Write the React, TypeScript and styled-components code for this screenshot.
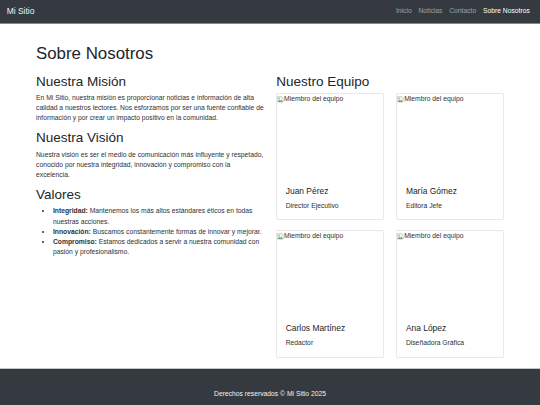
import React from 'react';
import styled, { createGlobalStyle } from 'styled-components';

const GlobalStyle = createGlobalStyle`
  html {
    font-size: 6.75px;
  }
  body {
    margin: 0;
    background: #fff;
    color: #212529;
    font-family: 'Liberation Sans', Arial, Helvetica, sans-serif;
    font-size: 1rem;
    line-height: 1.5;
  }
  * {
    box-sizing: border-box;
  }
`;

const navLinks = [
  { label: 'Inicio', active: false },
  { label: 'Noticias', active: false },
  { label: 'Contacto', active: false },
  { label: 'Sobre Nosotros', active: true },
];

const team = [
  { name: 'Juan Pérez', role: 'Director Ejecutivo' },
  { name: 'María Gómez', role: 'Editora Jefe' },
  { name: 'Carlos Martínez', role: 'Redactor' },
  { name: 'Ana López', role: 'Diseñadora Gráfica' },
];

const values = [
  { title: 'Integridad:', text: 'Mantenemos los más altos estándares éticos en todas nuestras acciones.' },
  { title: 'Innovación:', text: 'Buscamos constantemente formas de innovar y mejorar.' },
  { title: 'Compromiso:', text: 'Estamos dedicados a servir a nuestra comunidad con pasión y profesionalismo.' },
];

const BrokenImageIcon = () => (
  <IconSvg viewBox="0 0 16 16" aria-hidden="true">
    <path d="M1.5 1.5h10l3 3v10h-13z" fill="#f4f4f4" stroke="#8f8f8f" />
    <circle cx="5" cy="5.5" r="1.6" fill="#4a90d9" />
    <path d="M2.5 13.5l3.5-4.5 2.5 2.5 2-2 3 4z" fill="#3fa34d" />
  </IconSvg>
);

const App = () => {
  return (
    <>
      <GlobalStyle />
      <Navbar>
        <Brand>Mi Sitio</Brand>
        <NavList>
          {navLinks.map(({ label, active }) => (
            <li key={label}>
              <NavLink href="#" $active={active}>
                {label}
              </NavLink>
            </li>
          ))}
        </NavList>
      </Navbar>

      <Main>
        <PageTitle>Sobre Nosotros</PageTitle>
        <Row>
          <Column>
            <SectionTitle>Nuestra Misión</SectionTitle>
            <Text>
              En Mi Sitio, nuestra misión es proporcionar noticias e información de alta calidad a
              nuestros lectores. Nos esforzamos por ser una fuente confiable de información y por crear
              un impacto positivo en la comunidad.
            </Text>
            <SectionTitle>Nuestra Visión</SectionTitle>
            <Text>
              Nuestra visión es ser el medio de comunicación más influyente y respetado, conocido por
              nuestra integridad, innovación y compromiso con la excelencia.
            </Text>
            <SectionTitle>Valores</SectionTitle>
            <ValuesList>
              {values.map(({ title, text }) => (
                <ValueItem key={title}>
                  <strong>{title}</strong> {text}
                </ValueItem>
              ))}
            </ValuesList>
          </Column>

          <Column>
            <SectionTitle>Nuestro Equipo</SectionTitle>
            <TeamGrid>
              {team.map(({ name, role }) => (
                <Card key={name}>
                  <CardImage role="img" aria-label="Miembro del equipo">
                    <BrokenImageIcon />
                    <AltText>Miembro del equipo</AltText>
                  </CardImage>
                  <CardBody>
                    <CardTitle>{name}</CardTitle>
                    <CardText>{role}</CardText>
                  </CardBody>
                </Card>
              ))}
            </TeamGrid>
          </Column>
        </Row>
      </Main>

      <Footer>
        <FooterText>Derechos reservados © Mi Sitio 2025</FooterText>
      </Footer>
    </>
  );
};

const Navbar = styled.nav`
  display: flex;
  align-items: center;
  justify-content: space-between;
  height: 24px;
  padding: 0 1rem;
  background: #343a40;
  border-bottom: 1px solid #868a8e;
`;

const Brand = styled.a`
  color: #f2f2f2;
  font-size: 1.25rem;
  line-height: 1.5;
  text-decoration: none;
`;

const NavList = styled.ul`
  display: flex;
  margin: 0;
  padding: 0;
  list-style: none;
`;

const NavLink = styled.a<{ $active?: boolean }>`
  display: block;
  padding: 0 0.5rem;
  color: ${(p) => (p.$active ? '#fff' : 'rgba(255, 255, 255, 0.5)')};
  text-decoration: none;
`;

const Main = styled.main`
  width: 468px;
  margin: 20.25px auto 0;
`;

const PageTitle = styled.h1`
  margin: 0 0 9px;
  font-size: 2.5rem;
  font-weight: 500;
  line-height: 1.2;
`;

const Row = styled.div`
  display: grid;
  grid-template-columns: 1fr 1fr;
  column-gap: 12.6px;
  align-items: start;
`;

const Column = styled.div`
  min-width: 0;
`;

const SectionTitle = styled.h2`
  margin: 0 0 0.5rem;
  font-size: 2rem;
  font-weight: 500;
  line-height: 1.2;
`;

const Text = styled.p`
  margin: 0 -1.5px 1rem 0;
  color: #2c3136;
`;

const ValuesList = styled.ul`
  margin: 0 0 1rem;
  padding-left: 16.9px;
  color: #2c3136;
`;

const ValueItem = styled.li`
  strong {
    font-weight: 700;
  }
`;

const TeamGrid = styled.div`
  display: grid;
  grid-template-columns: 1fr 1fr;
  column-gap: 12.6px;
  row-gap: 1.5rem;
  margin-bottom: 1.5rem;
`;

const Card = styled.div`
  display: flex;
  flex-direction: column;
  background: #fff;
  border: 1px solid rgba(0, 0, 0, 0.09);
  border-radius: 1.7px;
  overflow: hidden;
`;

const CardImage = styled.div`
  display: flex;
  align-items: flex-start;
  height: 83px;
  padding-top: 1px;
`;

const IconSvg = styled.svg`
  flex: none;
  width: 6.75px;
  height: 6.75px;
  margin-top: 1px;
`;

const AltText = styled.span`
  font-size: 1rem;
  line-height: 1.2;
  color: #2c3136;
`;

const CardBody = styled.div`
  padding: 1.25rem;
`;

const CardTitle = styled.h5`
  margin: 0 0 0.75rem;
  font-size: 1.25rem;
  font-weight: 500;
  line-height: 1.2;
`;

const CardText = styled.p`
  margin: 0;
  color: #2c3136;
`;

const Footer = styled.footer`
  padding: 3rem 0;
  background: #343a40;
  border-top: 1px solid #c4c6c8;
  text-align: center;
`;

const FooterText = styled.p`
  margin: 0;
  color: #f2f2f2;
`;

export default App;
